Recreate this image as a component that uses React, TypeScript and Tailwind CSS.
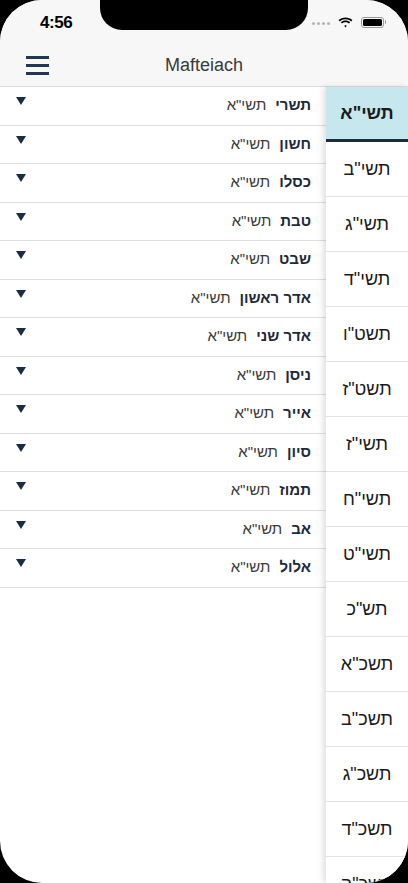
const months = [
  "תשרי",
  "חשון",
  "כסלו",
  "טבת",
  "שבט",
  "אדר ראשון",
  "אדר שני",
  "ניסן",
  "אייר",
  "סיון",
  "תמוז",
  "אב",
  "אלול",
];

const years = [
  'תשי"א',
  'תשי"ב',
  'תשי"ג',
  'תשי"ד',
  'תשט"ו',
  'תשט"ז',
  'תשי"ז',
  'תשי"ח',
  'תשי"ט',
  'תש"כ',
  'תשכ"א',
  'תשכ"ב',
  'תשכ"ג',
  'תשכ"ד',
  'תשכ"ה',
];

export default function App() {
  return (
    <div className="relative w-[408px] h-[883px] bg-black overflow-hidden font-['Liberation_Sans',Arial,sans-serif]">
      <div className="w-full h-full rounded-[42px] bg-white overflow-hidden flex flex-col">
        <Header />
        <div className="flex flex-1 min-h-0">
          <MonthList />
          <YearBar />
        </div>
      </div>
      <div className="absolute top-0 left-[100px] w-[208px] h-[30px] bg-black rounded-b-[22px]" />
    </div>
  );
}

function Header() {
  return (
    <div className="h-[87px] shrink-0 bg-[#f7f7f7] border-b border-[#dcdcdc] flex flex-col">
      <div className="h-[44px] flex items-center justify-between pl-[40px] pr-[22px]">
        <span className="text-[17px] font-semibold text-black tracking-tight pt-[1px]">4:56</span>
        <div className="flex items-center gap-[8px]">
          <div className="flex gap-[2px] pt-[3px]">
            {Array.from({ length: 4 }).map((_, i) => (
              <div key={i} className="w-[3px] h-[3px] rounded-full bg-[#b5b5b5]" />
            ))}
          </div>
          <svg width="15" height="11" viewBox="0 0 15 11">
            <path d="M7.5 2.2c2.2 0 4.2.8 5.7 2.2l1.2-1.3C12.6 1.4 10.2.4 7.5.4S2.4 1.4.6 3.1l1.2 1.3c1.5-1.4 3.5-2.2 5.7-2.2z" fill="#000" />
            <path d="M7.5 5.3c1.3 0 2.5.5 3.5 1.3l1.2-1.3C11 4.1 9.3 3.5 7.5 3.5S4 4.1 2.8 5.3L4 6.6c1-.8 2.2-1.3 3.5-1.3z" fill="#000" />
            <path d="M7.5 8.2c.5 0 1 .2 1.3.5L7.5 10.5 6.2 8.7c.3-.3.8-.5 1.3-.5z" fill="#000" />
          </svg>
          <div className="flex items-center">
            <div className="w-[23px] h-[11px] rounded-[3px] border border-[#999] p-[1px]">
              <div className="w-full h-full rounded-[1.5px] bg-black" />
            </div>
            <div className="w-[1.5px] h-[4px] bg-[#999] rounded-r-sm ml-[1px]" />
          </div>
        </div>
      </div>
      <div className="flex-1 relative flex items-center justify-center">
        <button className="absolute left-[26px] top-[12px] flex flex-col gap-[5.5px]">
          <span className="block w-[23px] h-[2.5px] bg-[#1d3754]" />
          <span className="block w-[23px] h-[2.5px] bg-[#1d3754]" />
          <span className="block w-[23px] h-[2.5px] bg-[#1d3754]" />
        </button>
        <span className="text-[18px] text-[#3a3a3a] font-normal mt-[1px]">Mafteiach</span>
      </div>
    </div>
  );
}

function MonthList() {
  return (
    <div className="flex-1 flex flex-col">
      {months.map((m) => (
        <div key={m} className="h-[38.5px] shrink-0 border-b border-[#dedede] flex items-start justify-between pl-[16px] pr-[15px]">
          <svg width="10" height="8" viewBox="0 0 10 8" className="mt-[10px]">
            <path d="M0 0h10L5 8z" fill="#1b2d44" />
          </svg>
          <div dir="rtl" className="text-[15px] mt-[9px] leading-[18px] flex gap-[9px]">
            <span className="font-bold text-[#1e2a3a]">{m}</span>
            <span className="text-[#3a3a3a]">{'תשי"א'}</span>
          </div>
        </div>
      ))}
    </div>
  );
}

function YearBar() {
  return (
    <div className="w-[82px] shrink-0 flex flex-col shadow-[-3px_0_6px_rgba(0,0,0,0.12)] bg-white z-10">
      {years.map((y, i) => (
        <div
          key={y}
          dir="rtl"
          className={
            i === 0
              ? "h-[55px] shrink-0 flex items-center justify-center bg-[#c7e7ef] border-b-[3px] border-[#1b2c40] text-[18px] font-bold text-[#1a1a1a]"
              : "h-[55px] shrink-0 flex items-center justify-center border-b border-[#e3e3e3] text-[18px] text-[#1a1a1a]"
          }
        >
          {y}
        </div>
      ))}
    </div>
  );
}
